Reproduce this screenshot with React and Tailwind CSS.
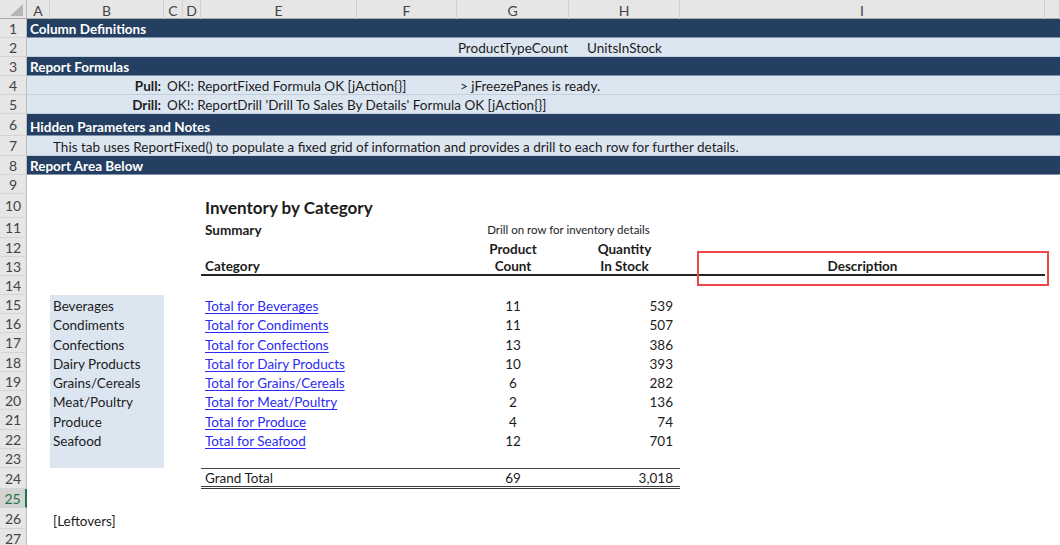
import React from "react";

const GRID = "grid grid-cols-[23px_114px_19px_18px_156px_100px_112px_111px_365px_1fr]";

const rows = [
  { name: "Beverages", count: 11, stock: "539", h: "h-[19px]" },
  { name: "Condiments", count: 11, stock: "507", h: "h-[19px]" },
  { name: "Confections", count: 13, stock: "386", h: "h-[20px]" },
  { name: "Dairy Products", count: 10, stock: "393", h: "h-[19px]" },
  { name: "Grains/Cereals", count: 6, stock: "282", h: "h-[19px]" },
  { name: "Meat/Poultry", count: 2, stock: "136", h: "h-[19px]" },
  { name: "Produce", count: 4, stock: "74", h: "h-[20px]" },
  { name: "Seafood", count: 12, stock: "701", h: "h-[19px]" },
];

function Row({ n, h, sel, band, children }) {
  const head = sel
    ? "bg-[#d3d3d3] text-[#217346] border-r-2 border-r-[#217346]"
    : "bg-[#e6e6e6] text-[#444] border-r border-r-[#bdbdbd]";
  return (
    <div className={`flex ${h}`}>
      <div className={`w-[27px] shrink-0 flex items-center justify-center border-b border-b-[#d4d4d4] text-[14px] ${head}`}>
        {n}
      </div>
      <div className={`flex-1 ${GRID} ${band || "bg-white"}`}>{children}</div>
    </div>
  );
}

function Cell({ c, className = "", children }) {
  return (
    <div className={`${c} flex items-end whitespace-nowrap leading-[16px] ${className}`}>
      {children}
    </div>
  );
}

const DARK = "bg-[#243f61] text-white font-bold border-b border-b-[#8193aa]";
const LIGHT = "bg-[#dce6f1] border-b border-b-[#c3cfdd]";
const TOTAL = "border-t border-t-[#444] border-b-[3px] border-double border-b-[#3a3a3a]";

export default function App() {
  const letters = ["A", "B", "C", "D", "E", "F", "G", "H", "I", ""];
  return (
    <div className="relative w-[1060px] h-[545px] overflow-hidden bg-white font-[Lato,sans-serif] text-[13.5px] text-[#1c1c1c]">
      {/* column headers */}
      <div className="flex h-[19px] bg-[#e6e6e6] border-b border-b-[#ababab]">
        <div className="w-[27px] shrink-0 flex items-end justify-end pr-[3px] pb-[2px] border-r border-r-[#bdbdbd]">
          <svg width="13" height="12" viewBox="0 0 13 12">
            <polygon points="0,12 13,0 13,12" fill="#b5b5b5" />
          </svg>
        </div>
        <div className={`flex-1 ${GRID}`}>
          {letters.map((l, i) => (
            <div key={i} className="flex items-center justify-center border-r border-r-[#cfcfcf] text-[14px] text-[#444]">
              {l}
            </div>
          ))}
        </div>
      </div>

      <Row n={1} h="h-[19px]" band={DARK}>
        <Cell c="col-start-1 col-span-9" className="pl-[3px]">Column Definitions</Cell>
      </Row>
      <Row n={2} h="h-[19px]" band={LIGHT}>
        <Cell c="col-start-7" className="justify-center">ProductTypeCount</Cell>
        <Cell c="col-start-8" className="justify-center">UnitsInStock</Cell>
      </Row>
      <Row n={3} h="h-[19px]" band={DARK}>
        <Cell c="col-start-1 col-span-9" className="pl-[3px]">Report Formulas</Cell>
      </Row>
      <Row n={4} h="h-[19px]" band={LIGHT}>
        <Cell c="col-start-2" className="justify-end pr-[3px] font-bold">Pull:</Cell>
        <Cell c="col-start-3 col-span-4" className="pl-[3px]">OK!: ReportFixed Formula OK [jAction{"{}"}]</Cell>
        <Cell c="col-start-7 col-span-3" className="pl-[3px]">&gt; jFreezePanes is ready.</Cell>
      </Row>
      <Row n={5} h="h-[19px]" band={LIGHT}>
        <Cell c="col-start-2" className="justify-end pr-[3px] font-bold">Drill:</Cell>
        <Cell c="col-start-3 col-span-7" className="pl-[3px]">
          OK!: ReportDrill 'Drill To Sales By Details' Formula OK [jAction{"{}"}]
        </Cell>
      </Row>
      <Row n={6} h="h-[22px]" band={DARK}>
        <Cell c="col-start-1 col-span-9" className="pl-[3px]">Hidden Parameters and Notes</Cell>
      </Row>
      <Row n={7} h="h-[20px]" band={LIGHT}>
        <Cell c="col-start-2 col-span-8" className="pl-[3px]">
          This tab uses ReportFixed() to populate a fixed grid of information and provides a drill to each row for further details.
        </Cell>
      </Row>
      <Row n={8} h="h-[19px]" band={DARK}>
        <Cell c="col-start-1 col-span-9" className="pl-[3px]">Report Area Below</Cell>
      </Row>
      <Row n={9} h="h-[19px]" />
      <Row n={10} h="h-[24px]">
        <Cell c="col-start-5 col-span-3" className="pl-[4px] text-[17px] font-bold leading-[21px]">
          Inventory by Category
        </Cell>
      </Row>
      <Row n={11} h="h-[20px]">
        <Cell c="col-start-5" className="pl-[4px] font-bold">Summary</Cell>
        <Cell c="col-start-7 col-span-2" className="justify-center text-[11.5px]">
          Drill on row for inventory details
        </Cell>
      </Row>
      <Row n={12} h="h-[19px]">
        <Cell c="col-start-7" className="justify-center font-bold">Product</Cell>
        <Cell c="col-start-8" className="justify-center font-bold">Quantity</Cell>
      </Row>
      <Row n={13} h="h-[19px]">
        <Cell c="col-start-5" className="pl-[4px] font-bold border-b-2 border-b-[#262626]">Category</Cell>
        <Cell c="col-start-6" className="border-b-2 border-b-[#262626]" />
        <Cell c="col-start-7" className="justify-center font-bold border-b-2 border-b-[#262626]">Count</Cell>
        <Cell c="col-start-8" className="justify-center font-bold border-b-2 border-b-[#262626]">In Stock</Cell>
        <Cell c="col-start-9" className="justify-center font-bold border-b-2 border-b-[#262626]">Description</Cell>
      </Row>
      <Row n={14} h="h-[19px]" />
      {rows.map((r, i) => (
        <Row key={r.name} n={15 + i} h={r.h}>
          <Cell c="col-start-2" className="pl-[3px] bg-[#dce6f1]">{r.name}</Cell>
          <Cell c="col-start-5 col-span-2" className="pl-[4px]">
            <span className="text-[#2b2bf5] underline underline-offset-2 decoration-1">Total for {r.name}</span>
          </Cell>
          <Cell c="col-start-7" className="justify-center">{r.count}</Cell>
          <Cell c="col-start-8" className="justify-end pr-[7px]">{r.stock}</Cell>
        </Row>
      ))}
      <Row n={23} h="h-[19px]">
        <div className="col-start-2 bg-[#dce6f1]" />
      </Row>
      <Row n={24} h="h-[21px]">
        <Cell c="col-start-5" className={`pl-[4px] ${TOTAL}`}>Grand Total</Cell>
        <Cell c="col-start-6" className={TOTAL} />
        <Cell c="col-start-7" className={`justify-center ${TOTAL}`}>69</Cell>
        <Cell c="col-start-8" className={`justify-end pr-[7px] ${TOTAL}`}>3,018</Cell>
      </Row>
      <Row n={25} h="h-[19px]" sel />
      <Row n={26} h="h-[21px]">
        <Cell c="col-start-2" className="pl-[3px]">[Leftovers]</Cell>
      </Row>
      <Row n={27} h="h-[19px]" />

      {/* annotation box */}
      <div className="absolute left-[697px] top-[251px] w-[352px] h-[35px] border-2 border-[#ef4747] pointer-events-none" />
    </div>
  );
}
